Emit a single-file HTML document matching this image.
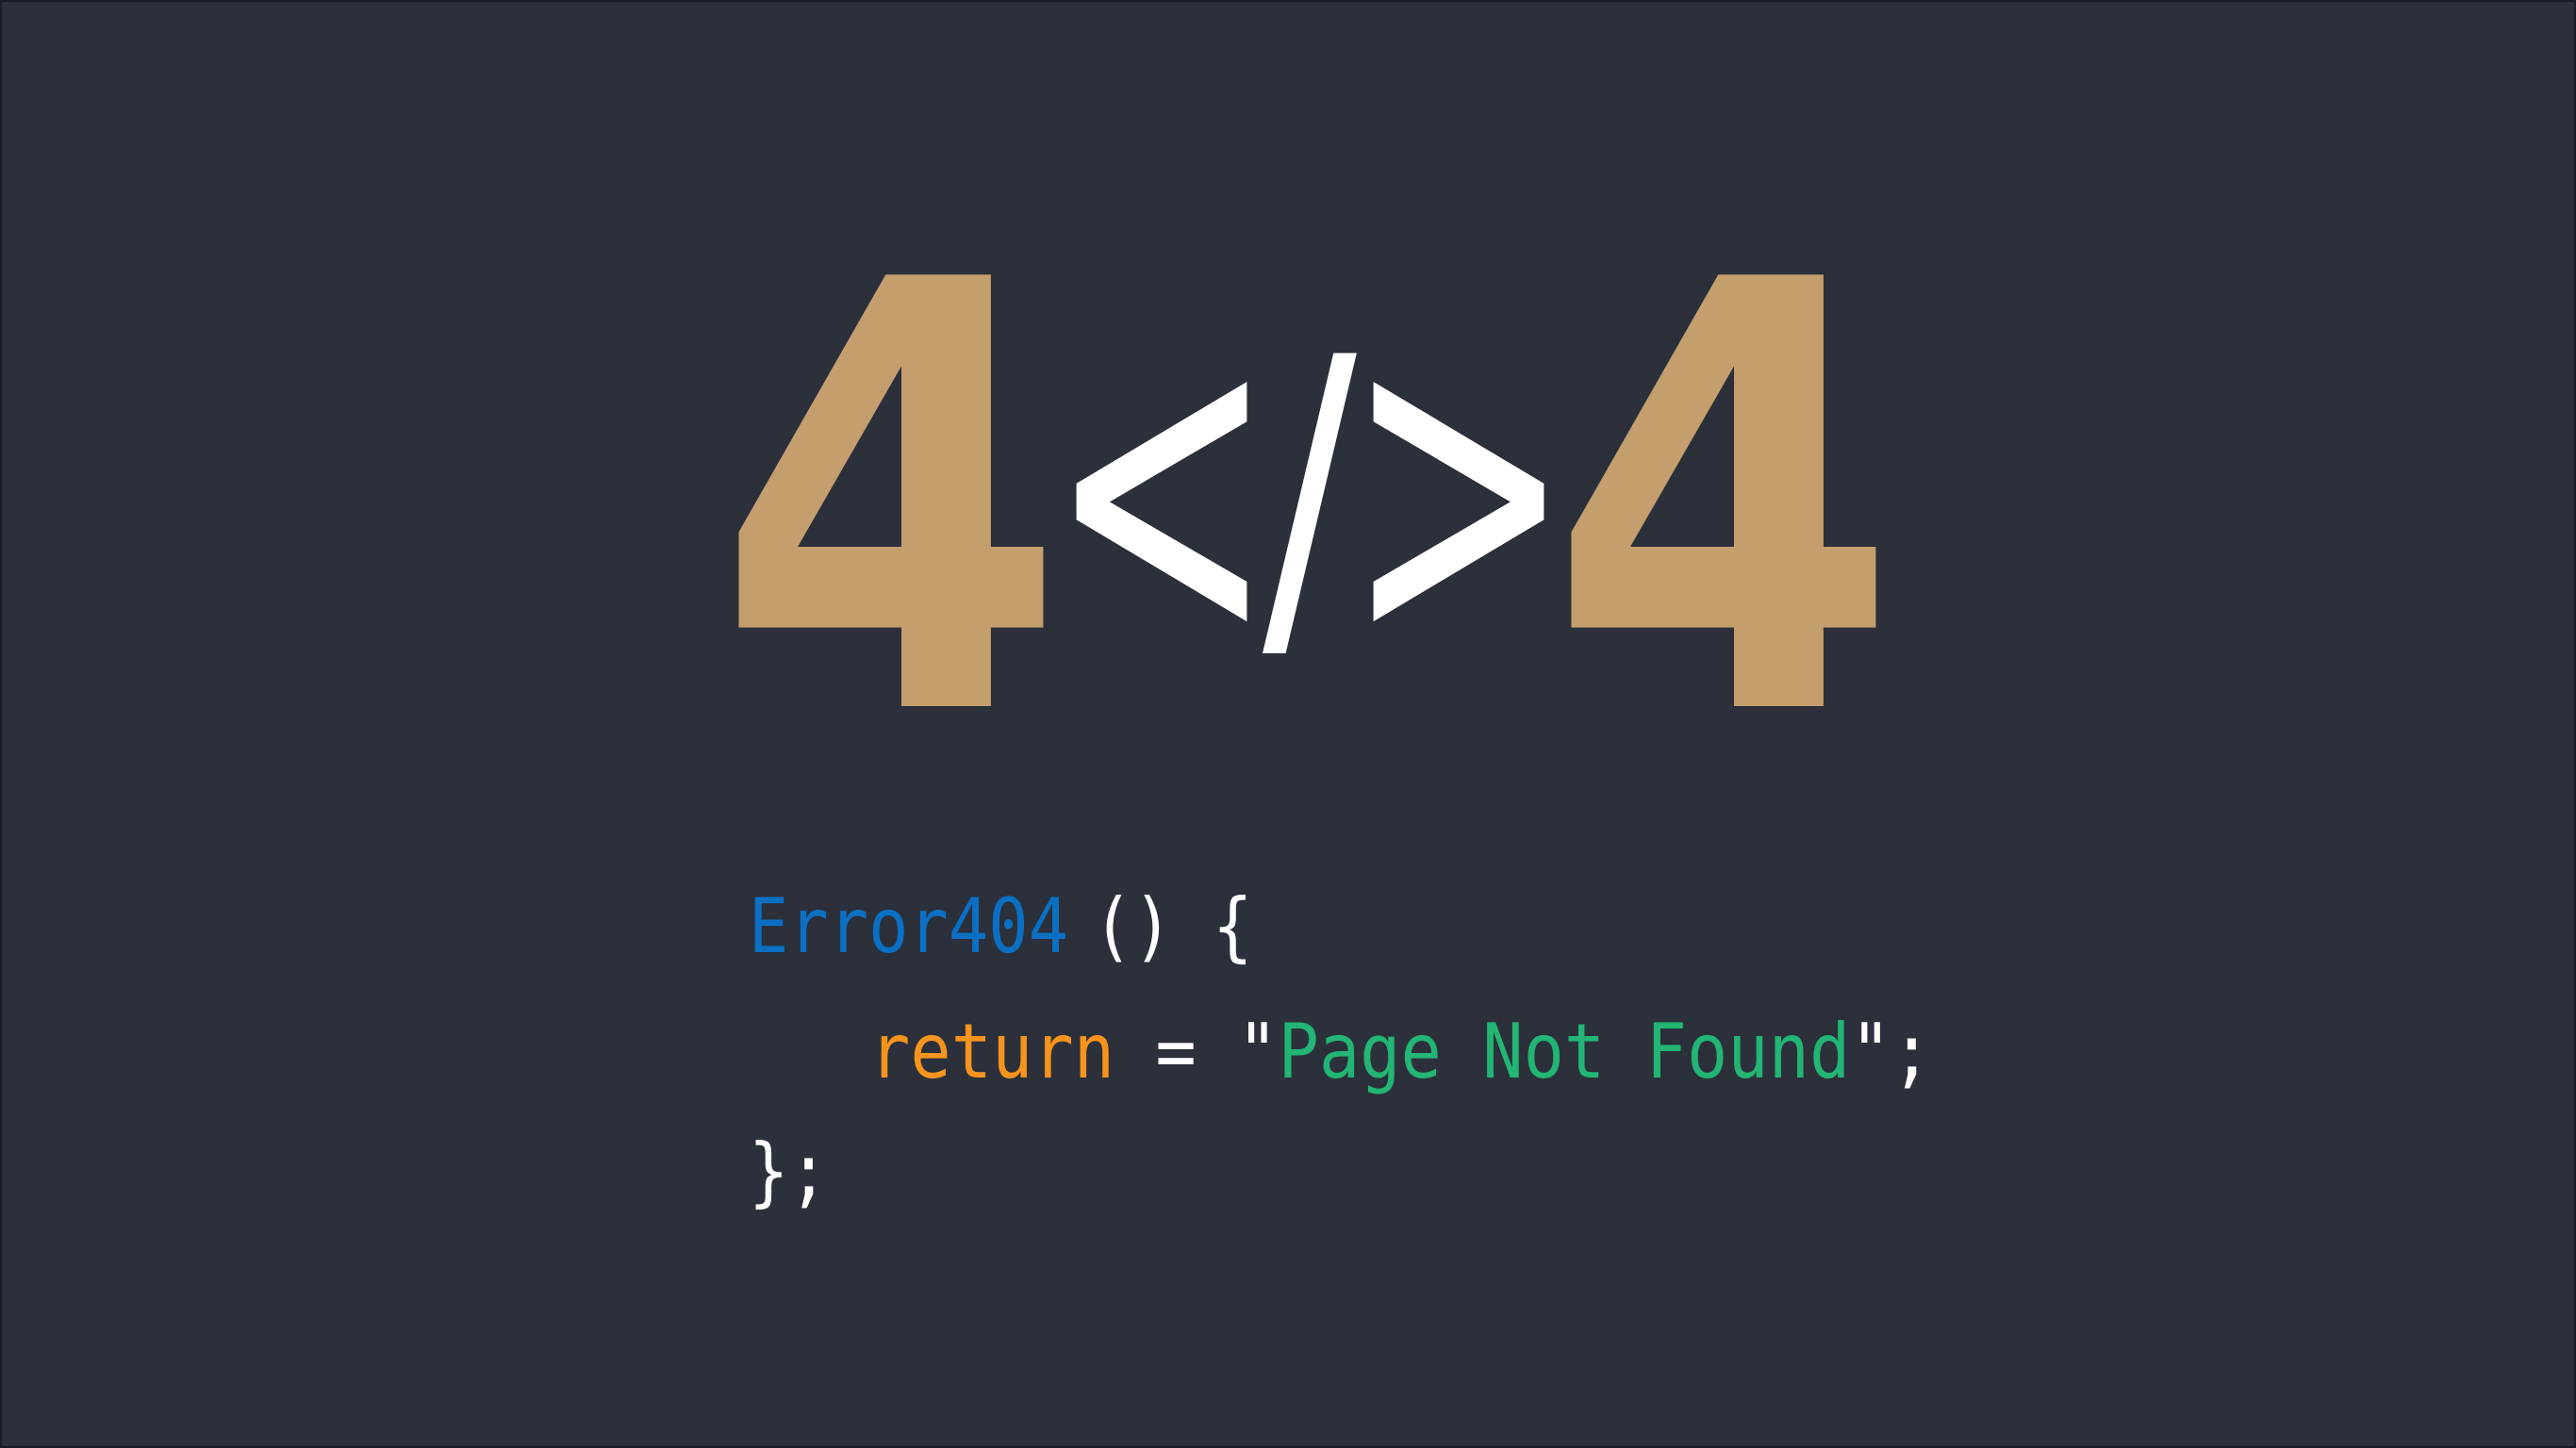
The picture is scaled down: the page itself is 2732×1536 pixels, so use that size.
<!DOCTYPE html>
<html><head><meta charset="utf-8"><style>
html,body{margin:0;padding:0}
body{width:2732px;height:1536px;background:#2b303b;position:relative;overflow:hidden;box-shadow:inset 0 0 0 2px #1a1d24}
svg{position:absolute;left:0;top:0}
.c{position:absolute;font-family:"DejaVu Sans Mono","Liberation Mono",monospace;font-size:80px;white-space:pre;transform:scaleX(0.88);transform-origin:0 0;line-height:1;color:#fff}
.b{color:#0b70c4}.o{color:#f7941d}.g{color:#22b573}
</style></head><body>
<svg width="2732" height="1536">
<g font-family="DejaVu Sans" font-weight="bold" fill="#c49e6c">
<text x="0" y="0" font-size="628" transform="translate(759.5,749) scale(0.85,1)">4</text>
<text x="0" y="0" font-size="628" transform="translate(1642.5,749) scale(0.85,1)">4</text>
</g>
<g font-family="DejaVu Sans" fill="#fff">
<text x="0" y="0" font-size="380" transform="translate(1111,681) scale(0.76,1.25)">&lt;</text>
<text x="0" y="0" font-size="380" transform="translate(1339,657) scale(0.78,1.02)">/</text>
<text x="0" y="0" font-size="380" transform="translate(1426,681) scale(0.76,1.25)">&gt;</text>
</g>
</svg>
<div class="c" style="left:794px;top:943px"><span class="b">Error404</span></div>
<div class="c" style="left:1159px;top:943px">() {</div>
<div class="c" style="left:922px;top:1076px;transform:scaleX(0.9)"><span class="o">return</span> = "<span class="g">Page Not Found</span>";</div>
<div class="c" style="left:794px;top:1203px">};</div>
</body></html>
